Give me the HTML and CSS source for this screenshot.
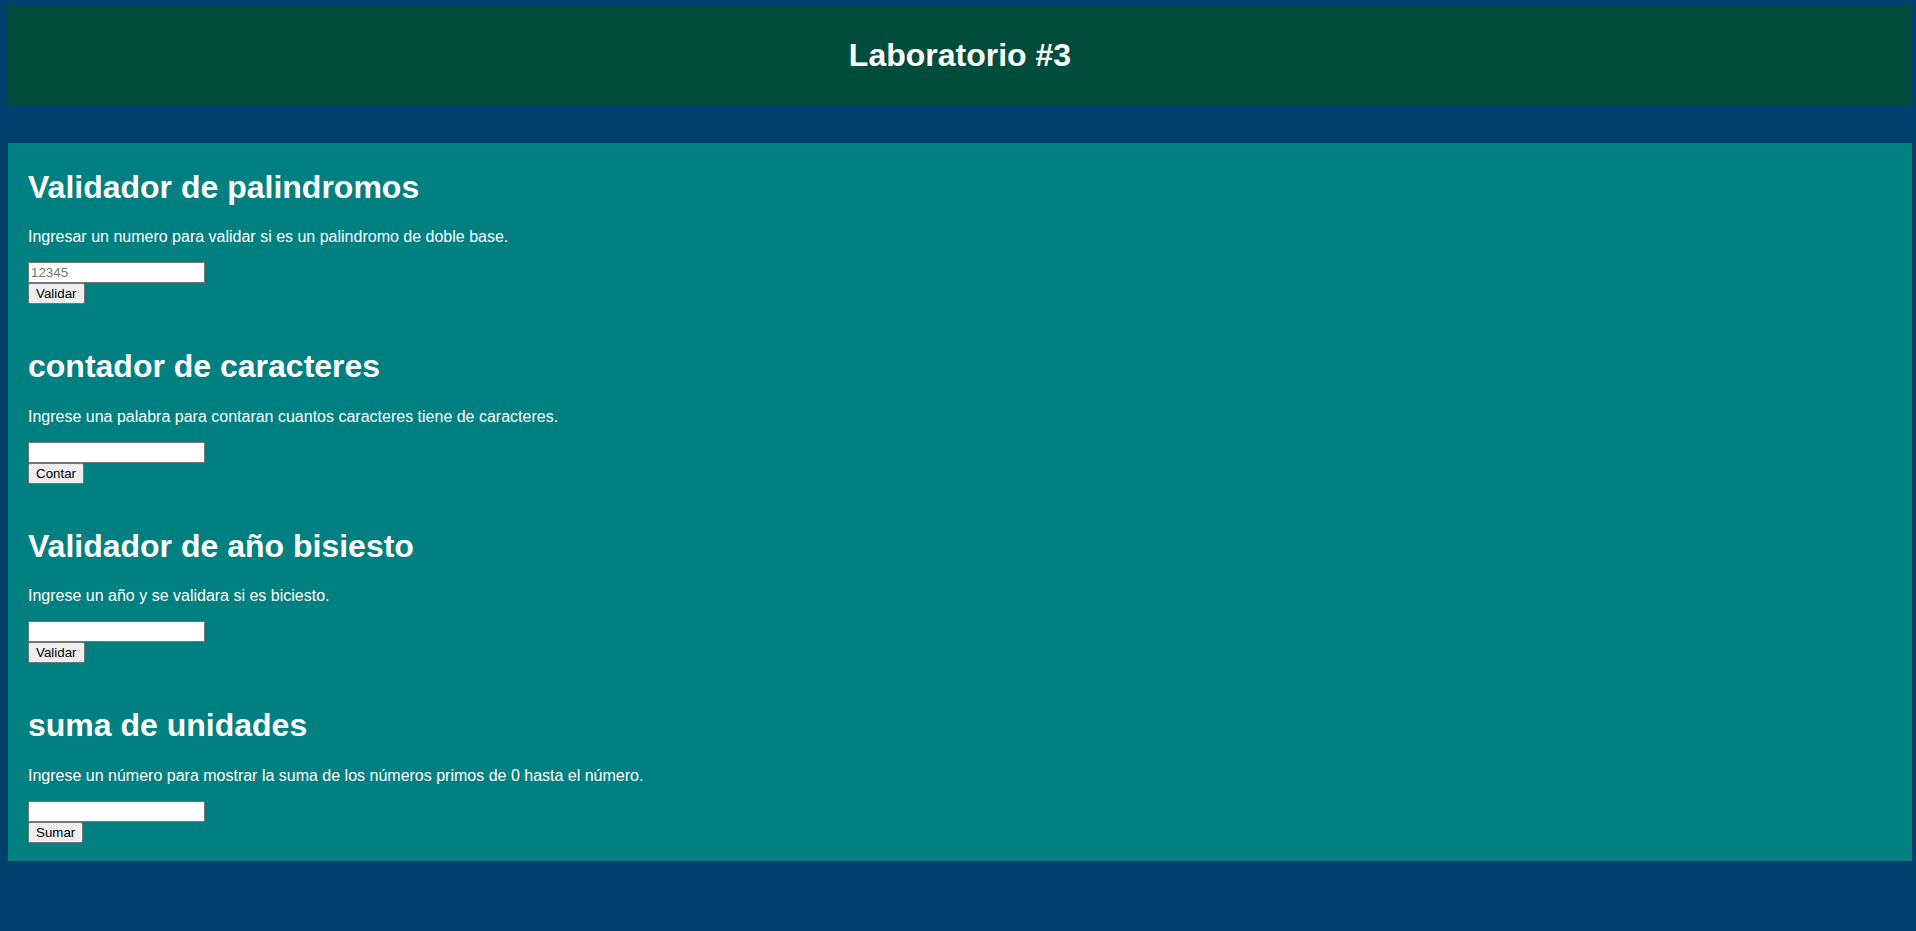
FILE: index.html
```html
<!DOCTYPE html>
<html lang="es">
<head>
<meta charset="utf-8">
<title>Laboratorio #3</title>
<link rel="stylesheet" href="styles.css">
</head>
<body>
<header class="top">
  <h1 class="top-title">Laboratorio #3</h1>
</header>
<main class="main">
  <section class="tool">
    <h2 class="tool-title">Validador de palindromos</h2>
    <p class="tool-text">Ingresar un numero para validar si es un palindromo de doble base.</p>
    <input class="tool-input" type="text" placeholder="12345">
    <button class="tool-btn" type="button">Validar</button>
  </section>
  <section class="tool">
    <h2 class="tool-title">contador de caracteres</h2>
    <p class="tool-text">Ingrese una palabra para contaran cuantos caracteres tiene de caracteres.</p>
    <input class="tool-input" type="text">
    <button class="tool-btn" type="button">Contar</button>
  </section>
  <section class="tool">
    <h2 class="tool-title">Validador de año bisiesto</h2>
    <p class="tool-text">Ingrese un año y se validara si es biciesto.</p>
    <input class="tool-input" type="text">
    <button class="tool-btn" type="button">Validar</button>
  </section>
  <section class="tool">
    <h2 class="tool-title">suma de unidades</h2>
    <p class="tool-text">Ingrese un número para mostrar la suma de los números primos de 0 hasta el número.</p>
    <input class="tool-input" type="text">
    <button class="tool-btn" type="button">Sumar</button>
  </section>
</main>
</body>
</html>
```

FILE: styles.css
```css
html {
  background: #003f6b;
}
body {
  margin: 6px 4px 0 8px;
  background: #003f6b;
  font-family: "Liberation Sans", Arial, sans-serif;
  color: #ffffff;
}
.top {
  background: #004d3c;
  padding: 30.5px 0 32px;
}
.top-title {
  margin: 0;
  font-size: 32px;
  font-weight: bold;
  text-align: center;
  line-height: normal;
}
.main {
  margin-top: 37.7px;
  background: #008080;
  padding: 3.3px 20px 0;
}
.tool {
  padding: 22.1px 0;
  display: flex;
  flex-direction: column;
  align-items: flex-start;
}
.tool:last-child {
  padding-bottom: 18.6px;
}
.tool-title {
  margin: 0 0 22.4px;
  font-size: 32px;
  font-weight: bold;
  line-height: normal;
}
.tool-text {
  margin: 0 0 16px;
  font-size: 16px;
  line-height: normal;
}
.tool-input {
  box-sizing: border-box;
  width: 177px;
  height: 21px;
  margin: 0;
  padding: 1px 2px;
  border: 1px solid #767676;
  background: #ffffff;
  font-family: "Liberation Sans", Arial, sans-serif;
  font-size: 13.33px;
  color: #000000;
}
.tool-input::placeholder {
  color: #757575;
}
.tool-btn {
  box-sizing: border-box;
  height: 21px;
  margin: 0;
  padding: 1px 7px;
  border: 1px solid #767676;
  border-radius: 2px;
  background: #efefef;
  font-family: "Liberation Sans", Arial, sans-serif;
  font-size: 13.33px;
  color: #000000;
  line-height: normal;
}
```
